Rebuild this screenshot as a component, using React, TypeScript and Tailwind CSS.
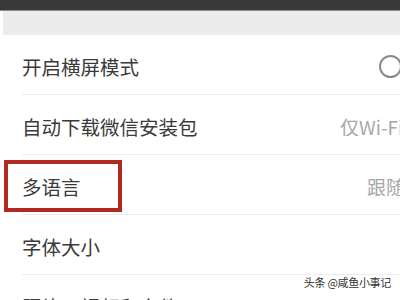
const rows = [
  { label: '开启横屏模式', kind: 'toggle' },
  { label: '自动下载微信安装包', kind: 'value', value: '仅Wi-Fi网络', width: 'w-[60px]' },
  { label: '多语言', kind: 'value', value: '跟随系统', width: 'w-[33px]', marked: true },
  { label: '字体大小', kind: 'none' },
  { label: '照片、视频和文件', kind: 'none' },
];

export default function App() {
  return (
    <div className="relative w-[400px] h-[300px] overflow-hidden bg-white font-['Noto_Sans_CJK_SC','Noto_Sans',sans-serif]">
      <div className="h-[11px] bg-[#39393b] border-b border-[#8c8c8c]" />
      <div className="ml-[3px] h-[24px] bg-[#ececec]" />

      {rows.map((row) => (
        <div key={row.label} className="relative h-[60px] pl-[22px]">
          <div className="flex h-full items-center pt-[4px] border-b border-[#ededed]">
            <span className="text-[19.5px] leading-none text-[#3a3a3a] whitespace-nowrap">{row.label}</span>
            {row.kind === 'toggle' && (
              <div className="ml-auto mr-[-2px] w-[23px] h-[23px] shrink-0 rounded-full border-2 border-[#8a8a8a]" />
            )}
            {row.kind === 'value' && (
              <span className={`ml-auto ${row.width} shrink-0 overflow-hidden whitespace-nowrap text-[19px] leading-none text-[#a8a8a8]`}>
                {row.value}
              </span>
            )}
          </div>
          {row.marked && (
            <div className="absolute left-[4px] top-[5px] w-[118px] h-[52px] border-4 border-[#b02a22]" />
          )}
        </div>
      ))}

      <div className="absolute right-[8px] top-[276px] text-[11px] tracking-[-0.3px] leading-none text-[#333333] bg-white/70 px-[1px] py-[1px]">
        头条 @咸鱼小事记
      </div>
    </div>
  );
}
